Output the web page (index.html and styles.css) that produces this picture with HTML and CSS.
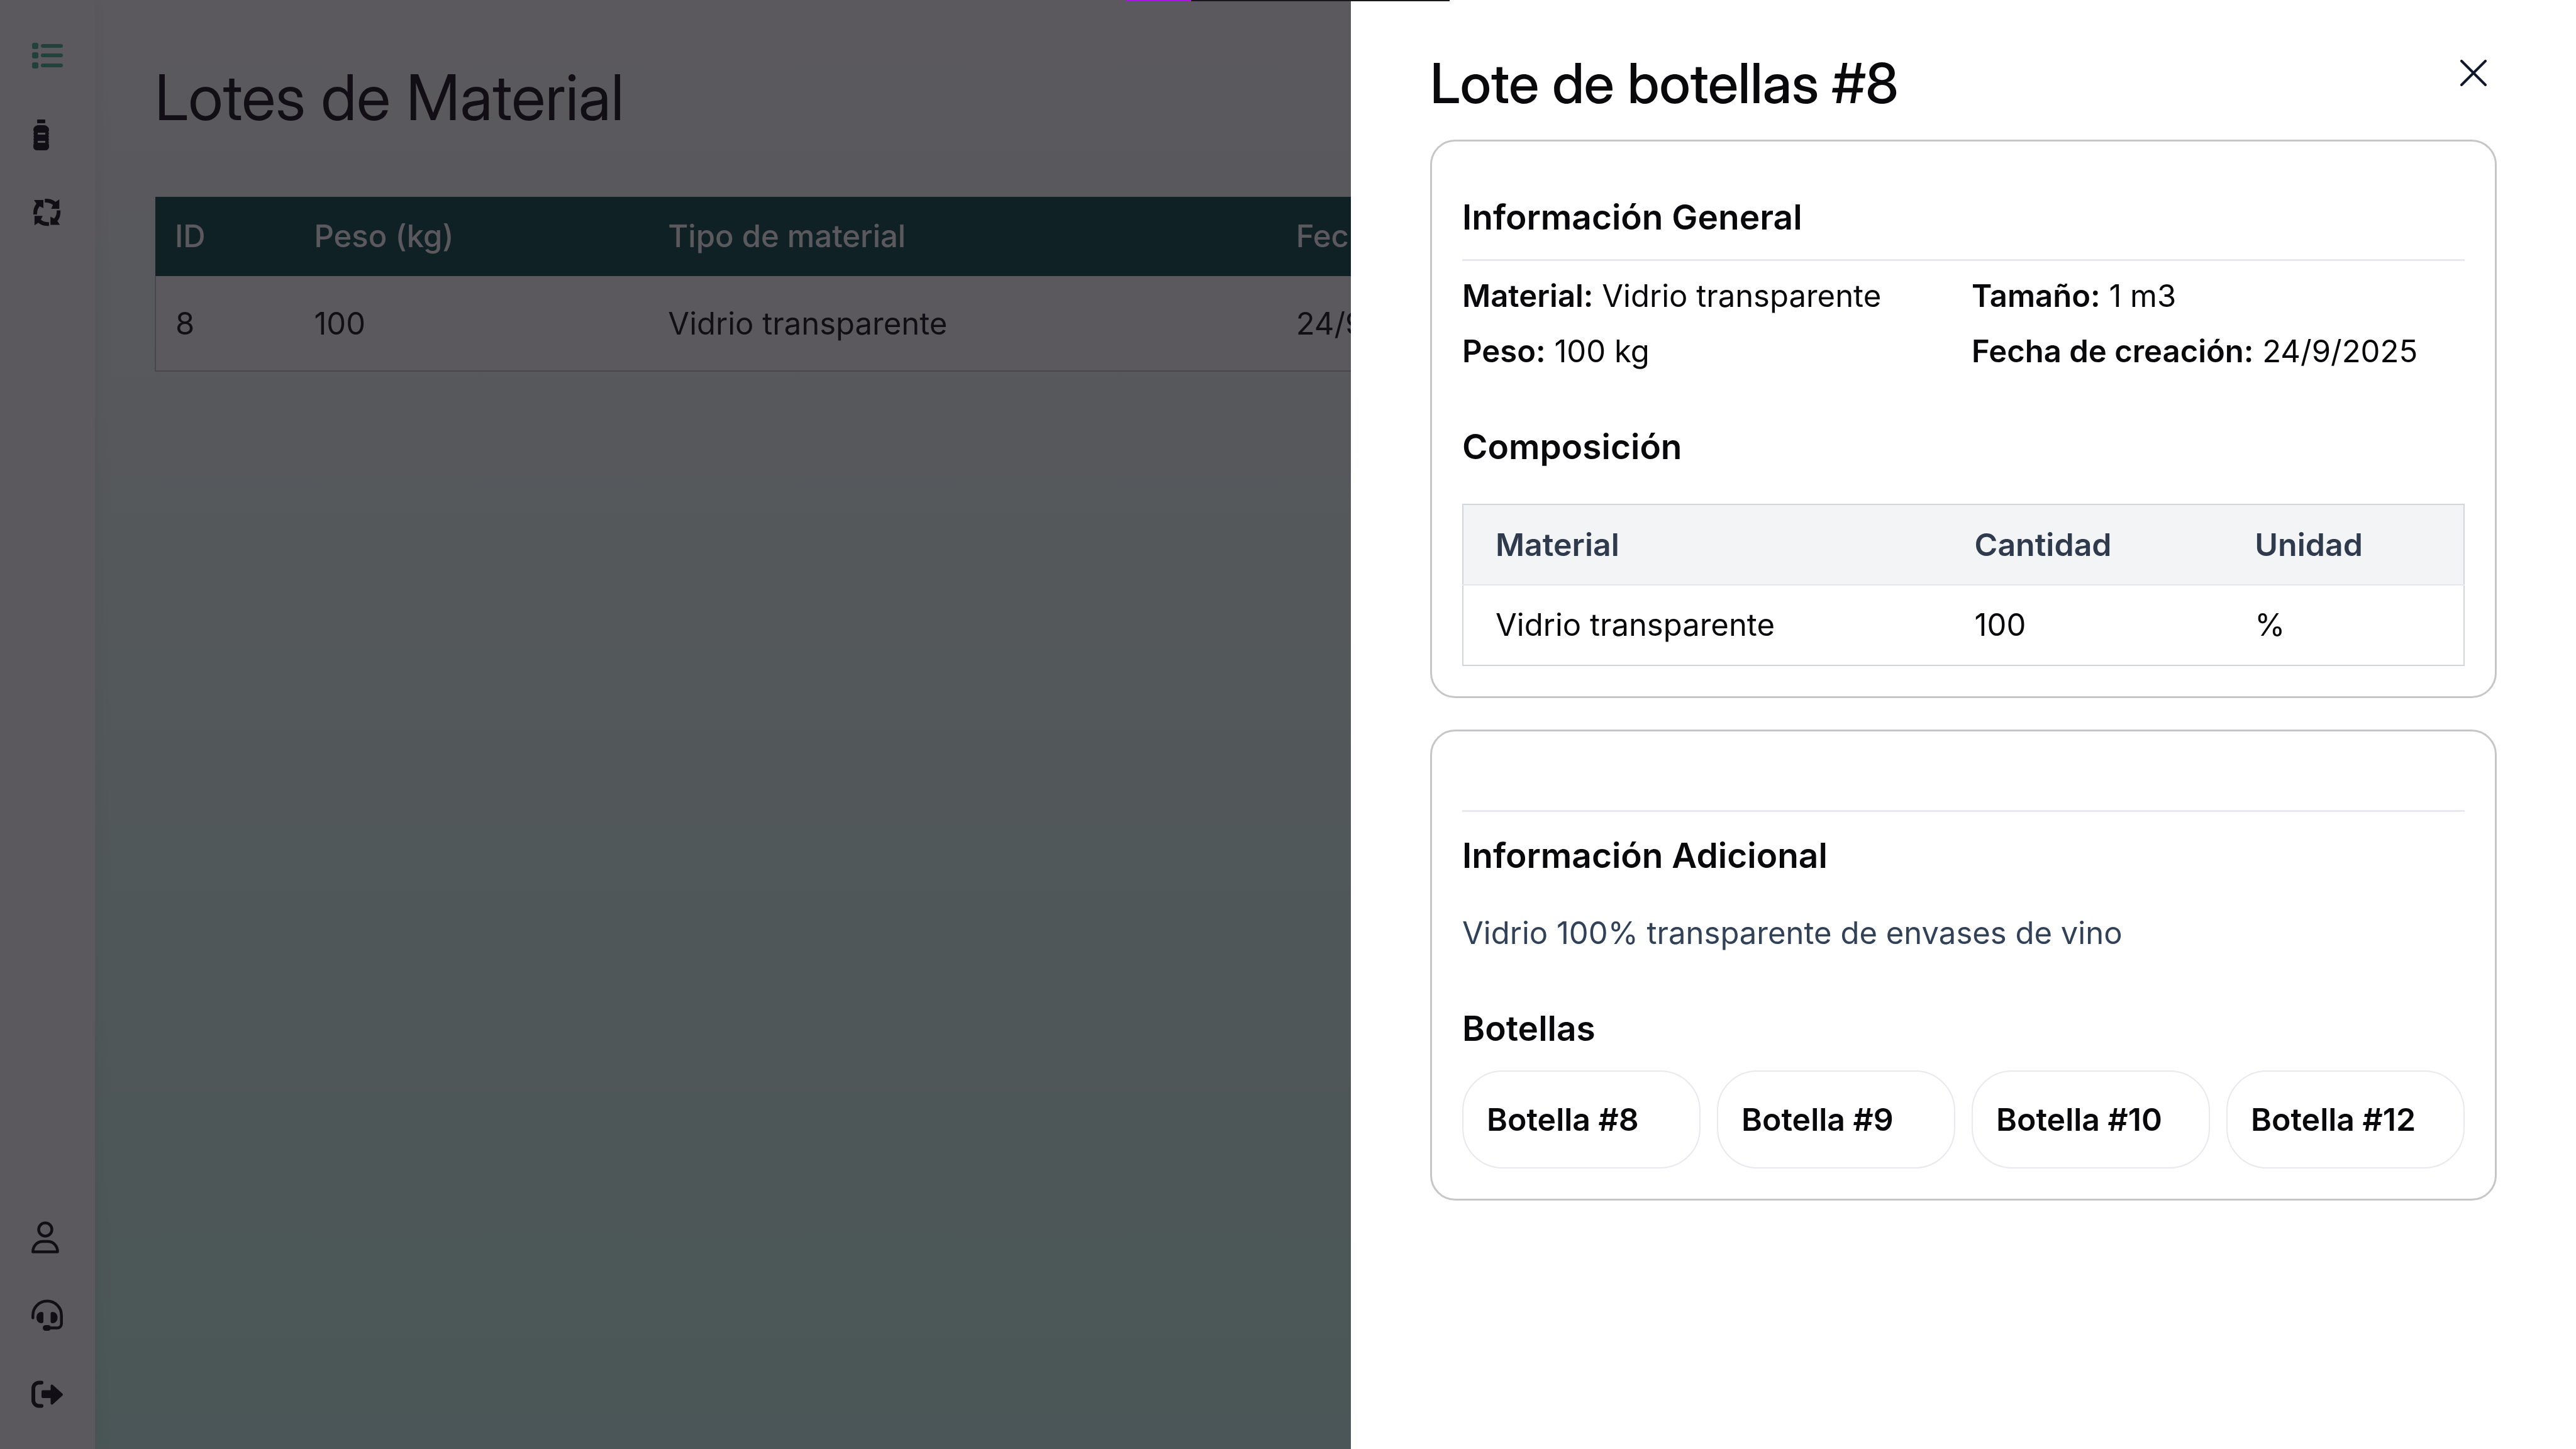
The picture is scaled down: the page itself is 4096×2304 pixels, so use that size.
FILE: index.html
```html
<!DOCTYPE html>
<html lang="es">
<head>
<meta charset="utf-8">
<title>Lotes de Material</title>
<link rel="stylesheet" href="styles.css">
</head>
<body>
<div class="app">
  <aside class="sidebar">
    <nav class="nav" aria-label="Principal">
      <a class="nav-link active" href="#lotes" aria-label="Lotes">
        <svg class="icon" viewBox="0 0 49 49" fill="currentColor">
          <rect x="1" y="4" width="10" height="10" rx="3"/><rect x="1" y="19" width="10" height="10" rx="3"/><rect x="1" y="35" width="10" height="10" rx="3"/>
          <rect x="15" y="6" width="35" height="6" rx="3"/><rect x="15" y="21" width="35" height="6" rx="3"/><rect x="15" y="37" width="35" height="6" rx="3"/>
        </svg>
      </a>
      <a class="nav-link" href="#botellas" aria-label="Botellas">
        <svg class="icon" viewBox="0 0 49 49" fill="currentColor">
          <rect x="9" y="1" width="13" height="6" rx="1"/>
          <path fill-rule="evenodd" d="M10 10h11c4 1 7 4 7 7 0 2-1 3-1 4 1 1 1 3 0 5 1 1 1 3 0 4 1 2 1 4 0 5 1 2 1 3 0 4 1 1 1 2 1 5 0 4-3 6-6 6H9c-3 0-6-2-6-6 0-3 0-4 1-5-1-1-1-2 0-4-1-1-1-3 0-5-1-1-1-3 0-4-1-2-1-4 0-5 0-1-1-2-1-4 0-3 3-6 7-7zM10 22v3h12v-3zM10 35v3h12v-3z"/>
        </svg>
      </a>
      <a class="nav-link" href="#reciclaje" aria-label="Reciclaje">
        <svg class="icon" viewBox="0 0 49 49" fill="currentColor">
          <g id="arrow"><path d="M3 27C3 19 4 15 8 10L4 4h15v13l-6-3c-3 4-4 7-4 13z"/></g>
          <use href="#arrow" transform="rotate(90 24.6 23.7)"/>
          <use href="#arrow" transform="rotate(180 24.6 23.7)"/>
          <use href="#arrow" transform="rotate(270 24.6 23.7)"/>
        </svg>
      </a>
    </nav>
    <nav class="nav" aria-label="Cuenta">
      <a class="nav-link" href="#perfil" aria-label="Perfil">
        <svg class="icon" viewBox="0 0 49 49" fill="none" stroke="currentColor" stroke-width="4.5" stroke-linejoin="round">
          <circle cx="22" cy="12" r="10.5"/>
          <path d="M2.3 47.5C2.3 38 9 31 18 31h8c9 0 15.500 7 15.500 16.500z"/>
        </svg>
      </a>
      <a class="nav-link" href="#soporte" aria-label="Soporte">
        <svg class="icon" viewBox="0 0 49 49" fill="none" stroke="currentColor" stroke-width="4.500" stroke-linecap="round">
          <path d="M2.300 27.500V23.500a22.700 22.700 0 0 1 45.400 0V37a6.500 6.500 0 0 1-6.500 6.500H26"/>
          <g fill="currentColor" stroke="none">
            <path d="M19 21v12c0 2-1 3-3 3-4 0-8-3-8-9s4-9 8-9c2 0 3 1 3 3zM30.500 21v12c0 2 1 3 3 3 4 0 8-3 8-9s-4-9-8-9c-2 0-3 1-3 3z"/>
            <rect x="18" y="39" width="13" height="9" rx="4.500"/>
          </g>
        </svg>
      </a>
      <a class="nav-link" href="#salir" aria-label="Salir">
        <svg class="icon" viewBox="0 0 49 49" fill="none" stroke="currentColor" stroke-linecap="round" stroke-linejoin="round">
          <path stroke-width="6" d="M16 5.500h-4a9 9 0 0 0-9 9v19a9 9 0 0 0 9 9h4"/>
          <path stroke-width="4" fill="currentColor" d="M18 19.600h14.500v-9L48 24.600 32.500 38.500v-10.500H18z"/>
        </svg>
      </a>
    </nav>
  </aside>

  <main class="main">
    <h1 class="page-title">Lotes de Material</h1>
    <table class="lots">
      <colgroup><col class="lots-id"><col class="lots-weight"><col class="lots-type"><col></colgroup>
      <thead><tr><th>ID</th><th>Peso (kg)</th><th>Tipo de material</th><th>Fecha</th></tr></thead>
      <tbody><tr><td>8</td><td>100</td><td>Vidrio transparente</td><td>24/9/2025</td></tr></tbody>
    </table>
  </main>
</div>

<div class="overlay"></div>

<section class="drawer" role="dialog" aria-labelledby="drawer-title">
  <header class="drawer-head">
    <h2 class="drawer-title" id="drawer-title">Lote de botellas #8</h2>
    <button class="close" type="button" aria-label="Cerrar">
      <svg class="close-icon" viewBox="0 0 42 42" fill="none" stroke="currentColor" stroke-width="4" stroke-linecap="round"><path d="M2 2l38 38M40 2L2 40"/></svg>
    </button>
  </header>

  <div class="cards">
    <article class="card">
      <div class="card-head"><h3 class="heading">Información General</h3></div>
      <div class="facts">
        <p><strong>Material:</strong> Vidrio transparente</p>
        <p><strong>Tamaño:</strong> 1 m3</p>
        <p><strong>Peso:</strong> 100 kg</p>
        <p><strong>Fecha de creación:</strong> 24/9/2025</p>
      </div>
      <h3 class="heading section">Composición</h3>
      <table class="composition">
        <colgroup><col class="comp-material"><col class="comp-amount"><col></colgroup>
        <thead><tr><th>Material</th><th>Cantidad</th><th>Unidad</th></tr></thead>
        <tbody><tr><td>Vidrio transparente</td><td>100</td><td>%</td></tr></tbody>
      </table>
    </article>

    <article class="card">
      <div class="card-head empty"></div>
      <h3 class="heading extra">Información Adicional</h3>
      <p class="note">Vidrio 100% transparente de envases de vino</p>
      <h3 class="heading section">Botellas</h3>
      <div class="bottles">
        <button class="bottle" type="button">Botella #8</button>
        <button class="bottle" type="button">Botella #9</button>
        <button class="bottle" type="button">Botella #10</button>
        <button class="bottle" type="button">Botella #12</button>
      </div>
    </article>
  </div>
</section>

<div class="progress"><div class="progress-value"></div></div>
</body>
</html>
```
FILE: styles.css
```css
* { box-sizing: border-box; }

body {
  margin: 0;
  color: #09090b;
  font-family: Inter, "Liberation Sans", sans-serif;
  font-size: 49px;
  line-height: 62px;
}

h1, h2, h3, p { margin: 0; }
button { font: inherit; color: inherit; background: none; cursor: pointer; }
table { width: 100%; border-collapse: collapse; table-layout: fixed; }
th, td { text-align: left; }

.app {
  display: flex;
  min-height: 100vh;
  background: linear-gradient(#ffffff, #c6f6e6);
}

/* Sidebar */
.sidebar {
  display: flex;
  flex-direction: column;
  justify-content: space-between;
  flex: none;
  width: 151px;
  padding: 64px 50px 62px;
  background: #ffffff;
  box-shadow: 0 0 28px rgba(0, 0, 0, 0.08);
}
.nav { display: flex; flex-direction: column; gap: 76px; }
.nav-link { display: block; height: 49px; color: #09090b; }
.nav-link.active { color: #40ae88; }
.icon { display: block; width: 49px; height: 49px; overflow: visible; }

/* Page */
.main { flex: 1; min-width: 0; padding: 93px 95px; }
.page-title,
.drawer-title { font-family: "Inter Display", Inter, sans-serif; }
.page-title {
  margin-bottom: 96px;
  font-size: 100px;
  font-weight: 400;
  line-height: 124px;
}
.lots-id { width: 5.9%; }
.lots-weight { width: 15%; }
.lots-type { width: 26.6%; }
.lots th {
  padding: 32px 31px;
  background: #00453c;
  color: #ffffff;
  font-weight: 500;
}
.lots td { padding: 45px 31px 43px; }
.lots tbody tr { background: #ffffff; border: 2px solid #c4c4c8; border-top: 0; }

.overlay { position: fixed; inset: 0; background: rgba(21, 19, 26, 0.7); }

/* Drawer */
.drawer {
  position: fixed;
  inset: 0 0 0 auto;
  width: calc(50% - 100px);
  padding: 79px 126px;
  overflow: hidden;
  background: #ffffff;
}
.drawer-head {
  display: flex;
  justify-content: space-between;
  align-items: flex-start;
  margin-bottom: 37px;
}
.drawer-title { font-size: 88px; font-weight: 500; line-height: 106px; }
.close { padding: 16px; border: 0; color: #0f172a; }
.close-icon { display: block; width: 42px; height: 42px; }

.cards { display: grid; gap: 50px; }
.card { padding: 48px; border: 3px solid #c6c6c8; border-radius: 40px; }
.card-head { padding: 38px 0 33px; border-bottom: 3px solid #e8e8ee; }
.card-head.empty { padding: 40px 0 37px; }
.heading { font-size: 55px; font-weight: 600; line-height: 68px; }
.heading.section { margin-top: 86px; }
.heading.extra { margin-top: 35px; }

.facts {
  display: grid;
  grid-template-columns: 1fr 1fr;
  gap: 26px;
  margin-top: 25px;
}
.facts strong { font-weight: 600; }

.composition { margin-top: 57px; border: 2px solid #d1d5dc; }
.comp-material { width: 47.9%; }
.comp-amount { width: 28%; }
.composition th, .composition td { padding: 32px 51px; }
.composition th {
  background: #f3f4f6;
  border-bottom: 2px solid #e5e7eb;
  color: #2f3b4d;
  font-size: 50px;
  font-weight: 600;
}

.note { margin-top: 59px; color: #314158; }

.bottles {
  display: grid;
  grid-template-columns: repeat(4, 1fr);
  gap: 26px;
  margin-top: 33px;
}
.bottle {
  padding: 45px 37px;
  border: 2px solid #e8e8ee;
  border-radius: 64px;
  font-size: 50px;
  font-weight: 600;
  text-align: left;
}

/* Loading bar over the top edge */
.progress {
  position: fixed;
  top: 0;
  left: 50%;
  width: 514px;
  height: 2px;
  margin-left: -257px;
  background: #18181b;
}
.progress-value { width: 20%; height: 100%; background: #b30df8; }
```
